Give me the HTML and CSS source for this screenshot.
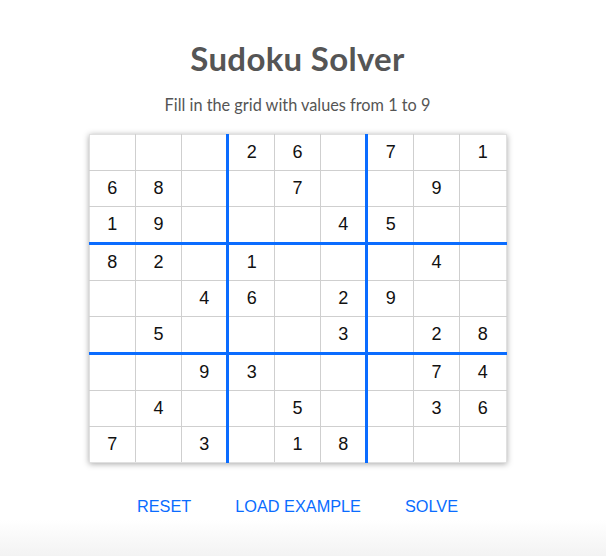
FILE: index.html
```html
<!DOCTYPE html>
<html>
<head>
<meta charset="utf-8">
<link rel="stylesheet" href="styles.css">
</head>
<body>
<main class="app">
  <h1 class="title">Sudoku Solver</h1>
  <p class="subtitle">Fill in the grid with values from 1 to 9</p>
  <table class="board">
    <tr><td></td><td></td><td></td><td>2</td><td>6</td><td></td><td>7</td><td></td><td>1</td></tr>
    <tr><td>6</td><td>8</td><td></td><td></td><td>7</td><td></td><td></td><td>9</td><td></td></tr>
    <tr><td>1</td><td>9</td><td></td><td></td><td></td><td>4</td><td>5</td><td></td><td></td></tr>
    <tr><td>8</td><td>2</td><td></td><td>1</td><td></td><td></td><td></td><td>4</td><td></td></tr>
    <tr><td></td><td></td><td>4</td><td>6</td><td></td><td>2</td><td>9</td><td></td><td></td></tr>
    <tr><td></td><td>5</td><td></td><td></td><td></td><td>3</td><td></td><td>2</td><td>8</td></tr>
    <tr><td></td><td></td><td>9</td><td>3</td><td></td><td></td><td></td><td>7</td><td>4</td></tr>
    <tr><td></td><td>4</td><td></td><td></td><td>5</td><td></td><td></td><td>3</td><td>6</td></tr>
    <tr><td>7</td><td></td><td>3</td><td></td><td>1</td><td>8</td><td></td><td></td><td></td></tr>
  </table>
  <div class="actions">
    <button class="btn">RESET</button>
    <button class="btn">LOAD EXAMPLE</button>
    <button class="btn">SOLVE</button>
  </div>
</main>
</body>
</html>
```
FILE: styles.css
```css
html {
  background: linear-gradient(to bottom, #ffffff 0, #ffffff 520px, #f3f3f3 556px);
  min-height: 100%;
}
body {
  margin: 0;
  font-family: "Lato", "Open Sans", sans-serif;
  color: #555;
}
.app {
  display: flex;
  flex-direction: column;
  align-items: center;
  padding-top: 38px;
  padding-right: 11px;
}
.title {
  margin: 0;
  font-size: 33px;
  line-height: 40px;
  font-weight: 700;
  color: #555;
  letter-spacing: 0.3px;
}
.subtitle {
  margin: 17px 0 0;
  font-size: 16.3px;
  line-height: 20px;
  color: #555;
}
.board {
  margin-top: 19px;
  border-collapse: collapse;
  table-layout: fixed;
  width: 418px;
  background: #fff;
  box-shadow: 0 1px 6px rgba(0, 0, 0, 0.35);
  font-family: "Liberation Sans", Arial, sans-serif;
  font-size: 18px;
  color: #111;
}
.board td {
  border: 1px solid #cfcfcf;
  height: 35px;
  padding: 0;
  text-align: center;
  vertical-align: middle;
}
.board td:nth-child(3),
.board td:nth-child(6) {
  border-right: 3px solid #0a6cff;
}
.board tr:nth-child(3) td,
.board tr:nth-child(6) td {
  border-bottom: 3px solid #0a6cff;
}
.board tr:first-child td { border-top: 1px solid #e0e0e0; }
.board tr:last-child td { border-bottom: 1px solid #e0e0e0; }
.board td:first-child { border-left: 1px solid #e0e0e0; }
.board td:last-child { border-right: 1px solid #e0e0e0; }
.actions {
  display: flex;
  gap: 44px;
  margin-top: 34px;
}
.btn {
  border: 0;
  background: none;
  padding: 0;
  font-family: "Liberation Sans", Arial, sans-serif;
  font-size: 16.3px;
  color: #0a6cff;
  cursor: pointer;
}
```
